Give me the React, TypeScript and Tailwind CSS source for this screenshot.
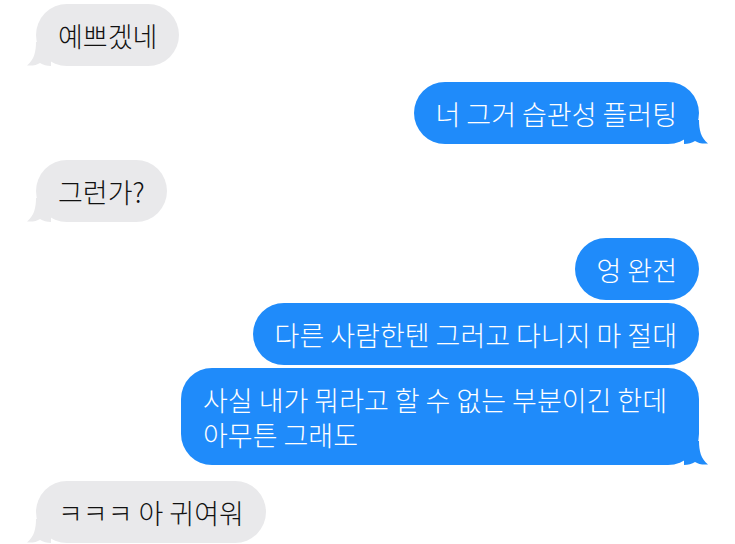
import { FC } from 'react';

interface Message {
    id: number;
    text: string[];
    mine: boolean;
    tail: boolean;
    gap: 'first' | 'group' | 'tight';
    wide?: boolean;
}

const messages: Message[] = [
    { id: 1, text: ['예쁘겠네'], mine: false, tail: true, gap: 'first' },
    { id: 2, text: ['너 그거 습관성 플러팅'], mine: true, tail: true, gap: 'group' },
    { id: 3, text: ['그런가?'], mine: false, tail: true, gap: 'group' },
    { id: 4, text: ['엉 완전'], mine: true, tail: false, gap: 'group' },
    { id: 5, text: ['다른 사람한텐 그러고 다니지 마 절대'], mine: true, tail: false, gap: 'tight' },
    { id: 6, text: ['사실 내가 뭐라고 할 수 없는 부분이긴 한데', '아무튼 그래도'], mine: true, tail: true, gap: 'tight', wide: true },
    { id: 7, text: ['ㅋㅋㅋ 아 귀여워'], mine: false, tail: true, gap: 'group' },
];

const gapClass = {
    first: 'mt-0',
    group: 'mt-4',
    tight: 'mt-[3px]',
};

// iMessage style tail, drawn for the right side and mirrored for the left
const Tail: FC<{ mine: boolean }> = ({ mine }) => (
    <svg
        viewBox="0 0 24 24"
        className={
            mine
                ? 'absolute bottom-0 -right-[9px] w-6 h-6 fill-[#1f8bfa]'
                : 'absolute bottom-0 -left-[9px] w-6 h-6 fill-[#e9e9eb] -scale-x-100'
        }
    >
        <path d="M0 0 H15 C15 10 17 18 24 23.4 C19 24 14 23 11 21 C8 23 4 24 0 24 Z" />
    </svg>
);

const Bubble: FC<{ message: Message }> = ({ message }) => {
    const { mine, tail, text, gap, wide } = message;
    return (
        <div
            className={`relative px-[22px] py-[13.5px] rounded-[31px] text-[27px] leading-[35px] font-light ${
                mine ? 'self-end bg-[#1f8bfa] text-white' : 'self-start bg-[#e9e9eb] text-[#111111]'
            } ${gapClass[gap]} ${wide ? 'w-[518px]' : ''}`}
        >
            {tail && <Tail mine={mine} />}
            <div className="relative">
                {text.map((line) => (
                    <div key={line} className="whitespace-nowrap">{line}</div>
                ))}
            </div>
        </div>
    );
};

export default function App() {
    return (
        <div
            className="w-[735px] h-[544px] overflow-hidden bg-white px-[36px] pt-[4px] flex flex-col"
            style={{ fontFamily: '"Noto Sans CJK KR", "Noto Sans", sans-serif' }}
        >
            {messages.map((m) => (
                <Bubble key={m.id} message={m} />
            ))}
        </div>
    );
}
